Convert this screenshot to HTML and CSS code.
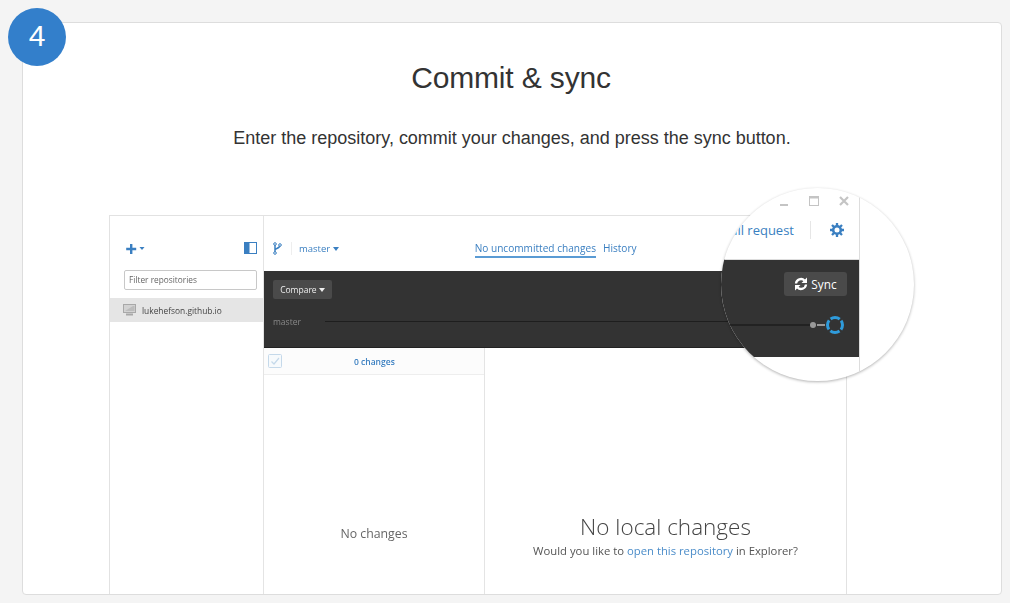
FILE: index.html
```html
<!DOCTYPE html>
<html lang="en">
<head>
    <meta charset="UTF-8">
    <title>Commit &amp; sync</title>
    <link rel="stylesheet" href="styles.css">
</head>
<body>
    <div class="card">
        <div class="badge">4</div>
        <h1>Commit &amp; sync</h1>
        <p class="lead">Enter the repository, commit your changes, and press the sync button.</p>

        <div class="app">
            <div class="sidebar">
                <div class="side-tools">
                    <svg class="plus" width="20" height="12" viewBox="0 0 20 12">
                        <path d="M5 1h2.4v3.8h3.8v2.4H7.4V11H5V7.200H1.200V4.800H5z" fill="#3a7fc1"/>
                        <path d="M14.500 4h5l-2.500 3z" fill="#3a7fc1"/>
                    </svg>
                    <svg width="14" height="13" viewBox="0 0 14 13">
                        <rect x="0.500" y="0.500" width="12" height="11" fill="#fff" stroke="#3a7fc1"/>
                        <rect x="0.500" y="0.500" width="5" height="11" fill="#3a7fc1"/>
                    </svg>
                </div>
                <div class="filter">Filter repositories</div>
                <div class="repo">
                    <svg width="13" height="12" viewBox="0 0 13 12">
                        <rect x="0.500" y="0.500" width="12" height="8" fill="#d2d2d2" stroke="#a8a8a8"/>
                        <path d="M2 7l8-5h1.500v5z" fill="#bcbcbc"/>
                        <rect x="3" y="9.500" width="7" height="2" fill="#a8a8a8"/>
                    </svg>
                    <span>lukehefson.github.io</span>
                </div>
            </div>

            <div class="main">
                <div class="topbar">
                    <svg class="branch" width="9" height="13" viewBox="0 0 9 13">
                        <path d="M2 2v9M2 8c0-2 5-1 5-5" fill="none" stroke="#3a7fc1" stroke-width="1.500"/>
                        <circle cx="2" cy="2" r="1.300" fill="#fff" stroke="#3a7fc1"/>
                        <circle cx="7" cy="3" r="1.300" fill="#fff" stroke="#3a7fc1"/>
                        <circle cx="2" cy="11" r="1.300" fill="#fff" stroke="#3a7fc1"/>
                    </svg>
                    <span class="branch-name">master <i class="caret"></i></span>
                    <div class="tabs">
                        <span class="tab tab-on">No uncommitted changes</span>
                        <span class="tab">History</span>
                    </div>
                </div>
                <div class="dark">
                    <div class="compare">Compare <i class="caret"></i></div>
                    <div class="timeline">
                        <span>master</span>
                        <div class="track"></div>
                    </div>
                </div>
                <div class="panes">
                    <div class="changes">
                        <div class="changes-head">
                            <svg width="14" height="14" viewBox="0 0 14 14">
                                <rect x="0.500" y="0.500" width="13" height="13" rx="1" fill="#f7fafc" stroke="#c5d9ea"/>
                                <path d="M3.500 7.500l2.500 2.500 5-6" fill="none" stroke="#c5d9ea" stroke-width="1.200"/>
                            </svg>
                            <span>0 changes</span>
                        </div>
                        <div class="changes-empty">No changes</div>
                    </div>
                    <div class="detail">
                        <div class="detail-title">No local changes</div>
                        <div class="detail-sub">Would you like to <span class="link">open this repository</span> in Explorer?</div>
                    </div>
                </div>
            </div>
        </div>

        <!-- magnified corner of the window, sits over the screenshot -->
        <div class="lens">
            <div class="lens-app">
                <div class="lens-head">
                    <div class="win-btns">
                        <svg width="10" height="11" viewBox="0 0 10 11"><rect x="1" y="8" width="8" height="2" fill="#c4c4c4"/></svg>
                        <svg width="10" height="11" viewBox="0 0 10 11"><rect x="0.500" y="0.500" width="9" height="9" fill="none" stroke="#c4c4c4"/><rect x="0" y="0" width="10" height="2.500" fill="#c4c4c4"/></svg>
                        <svg width="10" height="11" viewBox="0 0 10 11"><path d="M1 1l8 8M9 1l-8 8" stroke="#c4c4c4" stroke-width="2.200"/></svg>
                    </div>
                    <div class="lens-tools">
                        <span class="pull">Pull request</span>
                        <i class="lens-sep"></i>
                        <svg width="14" height="14" viewBox="0 0 14 14">
                            <circle cx="7" cy="7" r="3.800" fill="none" stroke="#3a7fc1" stroke-width="2.600"/>
                            <path d="M7 0v3M7 11v3M0 7h3M11 7h3M2 2l2 2M10 10l2 2M12 2l-2 2M4 10l-2 2" stroke="#3a7fc1" stroke-width="2.300"/>
                        </svg>
                    </div>
                </div>
                <div class="lens-dark">
                    <div class="sync">
                        <svg width="14" height="14" viewBox="0 0 14 14">
                            <path d="M2 6.500a5 5 0 0 1 8.500-3M12 7.500a5 5 0 0 1-8.500 3" fill="none" stroke="#fff" stroke-width="2.300"/>
                            <path d="M13 0.500v5.500H7.500zM1 13.500V8h5.500z" fill="#fff"/>
                        </svg>
                        <span>Sync</span>
                    </div>
                    <div class="lens-track">
                        <i class="lens-line"></i>
                        <i class="dot"></i>
                        <i class="stub"></i>
                        <svg width="20" height="20" viewBox="0 0 20 20">
                            <circle cx="10" cy="10" r="7.500" fill="none" stroke="#2f9bdb" stroke-width="3" stroke-dasharray="9.780 2" stroke-dashoffset="4.890"/>
                        </svg>
                    </div>
                </div>
            </div>
        </div>
    </div>
</body>
</html>
```

FILE: styles.css
```css
html, body {
    margin: 0;
    height: 100%;
}
body {
    box-sizing: border-box;
    height: 603px;
    padding: 22px 8px 8px 22px;
    background-color: #f4f4f4;
    font-family: "Liberation Sans", Arial, sans-serif;
    color: #333;
    overflow: hidden;
}
.card {
    position: relative;
    box-sizing: border-box;
    height: 100%;
    display: flex;
    flex-direction: column;
    align-items: center;
    background: #fff;
    border: 1px solid #ddd;
    border-radius: 4px;
}
.badge {
    position: absolute;
    left: -15px;
    top: -15px;
    width: 58px;
    height: 58px;
    border-radius: 50%;
    background: #337fcb;
    color: #fff;
    font-size: 30px;
    line-height: 56px;
    text-align: center;
}
h1 {
    margin: 38px 0 0;
    padding-right: 2px;
    font-size: 30px;
    font-weight: 400;
    line-height: 34px;
    letter-spacing: -0.15px;
}
.lead {
    margin: 31px 0 0;
    font-size: 18px;
    line-height: 24px;
    letter-spacing: -0.01px;
}

/* the app screenshot */
.app {
    flex: 1;
    align-self: flex-start;
    display: flex;
    width: 738px;
    box-sizing: border-box;
    margin: 65px 0 0 86px;
    border: 1px solid #e2e2e2;
    border-bottom: 0;
    font-family: "Open Sans", sans-serif;
    font-size: 10px;
    min-height: 0;
    filter: blur(0.3px);
}
.sidebar {
    width: 154px;
    box-sizing: border-box;
    border-right: 1px solid #e4e4e4;
    flex-shrink: 0;
}
.side-tools {
    display: flex;
    justify-content: space-between;
    align-items: center;
    padding: 26px 5px 0 15px;
}
.filter {
    box-sizing: border-box;
    height: 20px;
    margin: 15px 6px 0 14px;
    padding-left: 4px;
    border: 1px solid #c8c8c8;
    border-radius: 2px;
    font-size: 8.300px;
    line-height: 18px;
    color: #666;
}
.repo {
    display: flex;
    align-items: center;
    gap: 6px;
    height: 24px;
    margin-top: 8px;
    padding-left: 13px;
    background: #e5e5e5;
    color: #444;
    font-size: 8.400px;
}
.main {
    flex: 1;
    display: flex;
    flex-direction: column;
    min-width: 0;
}
.topbar {
    height: 55px;
    box-sizing: border-box;
    display: flex;
    align-items: center;
    padding: 9px 0 0 9px;
}
.branch-name {
    margin-left: 9px;
    padding-left: 7px;
    border-left: 1px solid #eee;
    color: #3a7fc1;
    font-size: 9.500px;
    line-height: 13px;
}
.caret {
    display: inline-block;
    border: 3px solid transparent;
    border-top: 4px solid currentColor;
    border-bottom: 0;
    vertical-align: 1px;
}
.tabs {
    display: flex;
    gap: 7px;
    margin-left: 136px;
    color: #3a7fc1;
    font-size: 10.100px;
    font-weight: 500;
}
.tab {
    padding: 2px 0 1px;
    border-bottom: 2px solid transparent;
}
.tab-on {
    border-bottom-color: #5a9bd4;
}
.dark {
    height: 77px;
    box-sizing: border-box;
    padding: 9px 0 0 9px;
    background: #333;
    border-bottom: 1px solid #222;
}
.compare {
    display: inline-block;
    box-sizing: border-box;
    width: 59px;
    height: 19px;
    background: #4a4a4a;
    border-radius: 2px;
    color: #eee;
    font-size: 8.500px;
    line-height: 19px;
    text-align: center;
}
.timeline {
    display: flex;
    align-items: center;
    gap: 24px;
    margin-top: 17px;
    color: #888;
    font-size: 8.500px;
}
.track {
    flex: 1;
    height: 1px;
    background: #1e1e1e;
}
.panes {
    flex: 1;
    display: flex;
    min-height: 0;
}
.changes {
    width: 221px;
    box-sizing: border-box;
    border-right: 1px solid #e4e4e4;
    flex-shrink: 0;
}
.changes-head {
    display: flex;
    align-items: center;
    height: 26px;
    padding-left: 4px;
    background: #fcfcfc;
    border-bottom: 1px solid #eee;
    color: #3a7fc1;
    font-size: 8.500px;
    font-weight: 600;
}
.changes-head span {
    margin-left: 72px;
}
.changes-empty {
    margin-top: 150px;
    text-align: center;
    font-size: 12.300px;
    line-height: 18px;
    color: #666;
}
.detail {
    flex: 1;
    padding-top: 164px;
    text-align: center;
    color: #555;
}
.detail-title {
    font-size: 22.500px;
    font-weight: 300;
    line-height: 30px;
    color: #444;
}
.detail-sub {
    margin-top: 1px;
    font-size: 11.300px;
    line-height: 16px;
}
.link {
    color: #4a8cc9;
}

/* magnifier */
.lens {
    position: absolute;
    left: 698px;
    top: 165px;
    width: 193px;
    height: 193px;
    border-radius: 50%;
    overflow: hidden;
    background: #fff;
    box-shadow: 0 1px 3px rgba(0, 0, 0, 0.3);
    font-family: "Open Sans", sans-serif;
}
.lens-app {
    width: 138px;
    height: 100%;
    border-right: 1px solid #ddd;
}
.lens-head {
    height: 71px;
    box-sizing: border-box;
    padding-top: 8px;
}
.win-btns {
    display: flex;
    justify-content: flex-end;
    gap: 20px;
    padding-right: 10px;
}
.lens-tools {
    display: flex;
    justify-content: flex-end;
    align-items: center;
    margin-top: 14px;
    padding-right: 15px;
}
.pull {
    color: #3a7fc1;
    font-size: 13px;
    white-space: nowrap;
}
.lens-sep {
    width: 1px;
    height: 18px;
    margin: 0 19px 0 16px;
    background: #e6e6e6;
}
.lens-dark {
    height: 98px;
    box-sizing: border-box;
    padding: 12px 12px 0 0;
    background: #333;
    border-top: 1px solid #ddd;
    display: flex;
    flex-direction: column;
    align-items: flex-end;
}
.sync {
    display: flex;
    align-items: center;
    justify-content: center;
    gap: 3px;
    width: 63px;
    height: 24px;
    background: #4a4a4a;
    border-radius: 3px;
    color: #fff;
    font-size: 11.800px;
    font-weight: 500;
}
.lens-track {
    display: flex;
    align-items: center;
    align-self: stretch;
    justify-content: flex-end;
    margin-top: 19px;
    padding-right: 2px;
}
.lens-line {
    flex: 1;
    height: 2px;
    background: #222;
}
.dot {
    width: 6px;
    height: 6px;
    border-radius: 50%;
    background: #999;
}
.stub {
    width: 8px;
    height: 2px;
    margin-left: 1px;
    background: #999;
}
```
